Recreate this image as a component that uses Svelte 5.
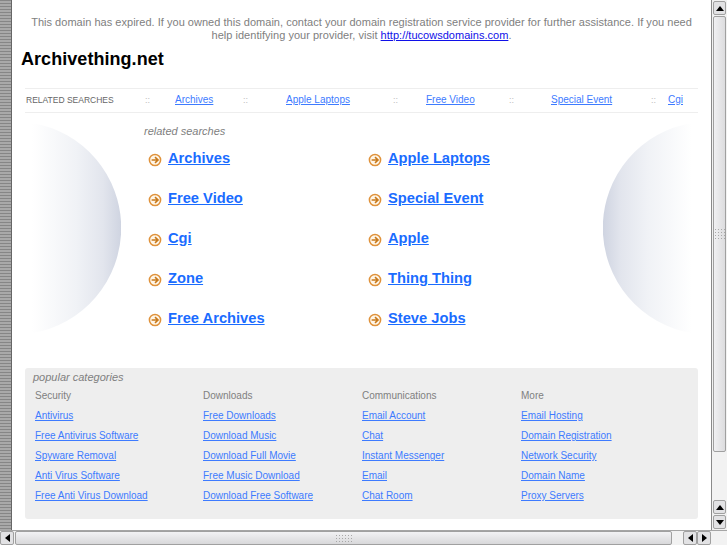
<script>
  const topLinks = ["Archives", "Apple Laptops", "Free Video", "Special Event", "Cgi"];
  const searches = [
    "Archives", "Apple Laptops", "Free Video", "Special Event", "Cgi",
    "Apple", "Zone", "Thing Thing", "Free Archives", "Steve Jobs"
  ];
  const categories = [
    { title: "Security", links: ["Antivirus", "Free Antivirus Software", "Spyware Removal", "Anti Virus Software", "Free Anti Virus Download"] },
    { title: "Downloads", links: ["Free Downloads", "Download Music", "Download Full Movie", "Free Music Download", "Download Free Software"] },
    { title: "Communications", links: ["Email Account", "Chat", "Instant Messenger", "Email", "Chat Room"] },
    { title: "More", links: ["Email Hosting", "Domain Registration", "Network Security", "Domain Name", "Proxy Servers"] }
  ];
</script>

<div class="window">
  <div class="strip"></div>

  <main class="page">
    <p class="notice">This domain has expired. If you owned this domain, contact your domain registration service provider for further assistance. If you need help identifying your provider, visit <a href="#top">http://tucowsdomains.com</a>.</p>
    <h1>Archivething.net</h1>

    <div class="related-bar">
      <span class="label">RELATED SEARCHES</span>
      {#each topLinks as link}
        <span class="sep">::</span>
        <a href="#top">{link}</a>
      {/each}
    </div>

    <div class="middle">
      <svg class="orb" width="89" height="210" viewBox="0 0 89 210">
        <defs>
          <linearGradient id="orbl" x1="0" x2="1" y1="0" y2="0">
            <stop offset="0" stop-color="#fff" />
            <stop offset="0.5" stop-color="#f0f2f6" />
            <stop offset="0.8" stop-color="#e2e5ed" />
            <stop offset="1" stop-color="#cfd4e1" />
          </linearGradient>
        </defs>
        <path d="M0 0 A106.4 106.4 0 0 1 0 210 Z" fill="url(#orbl)" />
      </svg>

      <div class="results">
        <div class="results-title">related searches</div>
        <div class="results-grid">
          {#each searches as item}
            <div class="result">
              <svg width="14" height="14" viewBox="0 0 14 14">
                <circle cx="7" cy="7" r="5.6" fill="#fff6e8" stroke="#e0923a" stroke-width="1.5" />
                <path d="M3.6 7H9.6M7 4.2L10 7L7 9.8" fill="none" stroke="#c87a1c" stroke-width="1.6" />
              </svg>
              <a href="#top">{item}</a>
            </div>
          {/each}
        </div>
      </div>

      <svg class="orb" width="89" height="210" viewBox="0 0 89 210">
        <defs>
          <linearGradient id="orbr" x1="1" x2="0" y1="0" y2="0">
            <stop offset="0" stop-color="#fff" />
            <stop offset="0.5" stop-color="#f0f2f6" />
            <stop offset="0.8" stop-color="#e2e5ed" />
            <stop offset="1" stop-color="#cfd4e1" />
          </linearGradient>
        </defs>
        <path d="M89 0 A106.4 106.4 0 0 0 89 210 Z" fill="url(#orbr)" />
      </svg>
    </div>

    <section class="popular">
      <div class="popular-title">popular categories</div>
      <div class="columns">
        {#each categories as cat}
          <div class="column">
            <div class="col-title">{cat.title}</div>
            {#each cat.links as link}
              <a href="#top">{link}</a>
            {/each}
          </div>
        {/each}
      </div>
    </section>
  </main>

  <div class="vbar">
    <div class="btn"><i class="up"></i></div>
    <div class="thumb vthumb"><span class="grip"></span></div>
    <div class="track"></div>
    <div class="btn"><i class="up"></i></div>
    <div class="btn"><i class="down"></i></div>
  </div>

  <div class="hbar">
    <div class="btn"><i class="left"></i></div>
    <div class="thumb hthumb"><span class="grip"></span></div>
    <div class="track"></div>
    <div class="btn"><i class="left"></i></div>
    <div class="btn"><i class="right"></i></div>
  </div>
</div>

<style>
:global(body) {
  margin: 0;
  background: #fff;
}

.window {
  width: 727px;
  height: 545px;
  overflow: hidden;
  display: grid;
  grid-template-columns: 12px 699px 16px;
  grid-template-rows: 530px 15px;
  font-family: "Liberation Sans", Arial, sans-serif;
}

.strip {
  background: repeating-linear-gradient(#868686 0 1px, #a9a9a9 1px 3px);
  border-right: 1px solid #666;
}

.page {
  height: 530px;
  overflow: hidden;
  padding-top: 16px;
  box-sizing: border-box;
}

a {
  color: #3d7bff;
}

.notice {
  margin: 0 auto;
  width: 672px;
  text-align: center;
  font-size: 11px;
  letter-spacing: 0.025px;
  line-height: 13px;
  color: #808080;
}

.notice a {
  color: #1010e8;
}

h1 {
  margin: 6px 0 0 9px;
  font-size: 18px;
  letter-spacing: 0.05px;
  line-height: 22px;
  color: #000;
}

.related-bar {
  margin: 18px 13px 0;
  height: 25px;
  padding-bottom: 2px;
  box-sizing: border-box;
  border-top: 1px solid #eeeeee;
  border-bottom: 1px solid #eeeeee;
  display: grid;
  grid-template-columns: 120px 30px 68px 43px 107px 33px 83px 42px 100px 17px auto;
  align-items: center;
  justify-items: start;
  font-size: 10px;
  white-space: nowrap;
}

.label {
  margin-left: 1px;
  font-size: 8.5px;
  color: #666;
}

.sep {
  color: #bbb;
  font-size: 9px;
}

.middle {
  display: flex;
  margin-top: 10px;
  height: 245px;
  padding-left: 20px;
}

.orb {
  flex: none;
}

.results {
  width: 482px;
  padding-left: 23px;
  box-sizing: border-box;
}

.results-title {
  font-size: 11px;
  font-style: italic;
  line-height: 13px;
  margin-top: 2px;
  color: #808080;
}

.results-grid {
  display: grid;
  grid-template-columns: 220px 220px;
  grid-auto-rows: 40px;
  margin-top: 10px;
}

.result {
  display: flex;
  align-items: center;
  gap: 6px;
  height: 20px;
  padding-left: 4px;
  font-size: 14.7px;
  font-weight: bold;
}

.result svg {
  margin-top: 3px;
}

.result a {
  color: #1a6cff;
}

.popular {
  margin: 0 13px;
  height: 151px;
  background: #eeeeee;
  border-radius: 3px;
  padding: 2px 8px 0;
  box-sizing: border-box;
}

.popular-title {
  font-size: 11px;
  font-style: italic;
  line-height: 14px;
  color: #808080;
}

.columns {
  display: grid;
  grid-template-columns: 168px 159px 159px 1fr;
  margin: 5px 0 0 2px;
  font-size: 10px;
}

.column {
  display: flex;
  flex-direction: column;
  align-items: flex-start;
}

.col-title,
.column a {
  height: 20px;
  line-height: 14px;
}

.col-title {
  color: #808080;
}

.vbar,
.hbar {
  display: flex;
  background: #f2f2f2;
}

.vbar {
  grid-row: 1;
  grid-column: 3;
  flex-direction: column;
  padding: 1px 1px 0;
  border-left: 1px solid #8a8a8a;
  box-sizing: border-box;
}

.hbar {
  grid-row: 2;
  grid-column: 1 / 4;
  padding: 0 16px 0 0;
  border-top: 1px solid #a5a5a5;
  box-sizing: border-box;
}

.btn {
  flex: none;
  display: flex;
  align-items: center;
  justify-content: center;
  box-sizing: border-box;
  background: #e2e2e4;
  border: 1px solid #a0a0a0;
  border-radius: 2px;
}

.vbar .btn {
  height: 14px;
  margin-bottom: 1px;
}

.hbar .btn {
  width: 14px;
}

.thumb {
  box-sizing: border-box;
  display: flex;
  align-items: center;
  justify-content: center;
  border: 1px solid #a0a0a0;
  border-radius: 2px;
}

.vthumb {
  height: 436px;
  background: linear-gradient(90deg, #f0f0f2, #dcdcde);
}

.hthumb {
  margin-left: 1px;
  width: 657px;
  background: linear-gradient(#f2f2f4, #d8d8da);
}

.track {
  flex: 1;
}

.grip {
  width: 12px;
  height: 12px;
  background-image: radial-gradient(#a8a8a8 1px, transparent 1px);
  background-size: 3px 3px;
}

.hthumb .grip {
  width: 18px;
  height: 9px;
}

i {
  display: block;
  width: 0;
  height: 0;
}

.up {
  border: 4px solid transparent;
  border-top: 0;
  border-bottom: 5px solid #000;
}

.down {
  border: 4px solid transparent;
  border-bottom: 0;
  border-top: 5px solid #000;
}

.left {
  border: 4px solid transparent;
  border-left: 0;
  border-right: 5px solid #000;
}

.right {
  border: 4px solid transparent;
  border-right: 0;
  border-left: 5px solid #000;
}
</style>
